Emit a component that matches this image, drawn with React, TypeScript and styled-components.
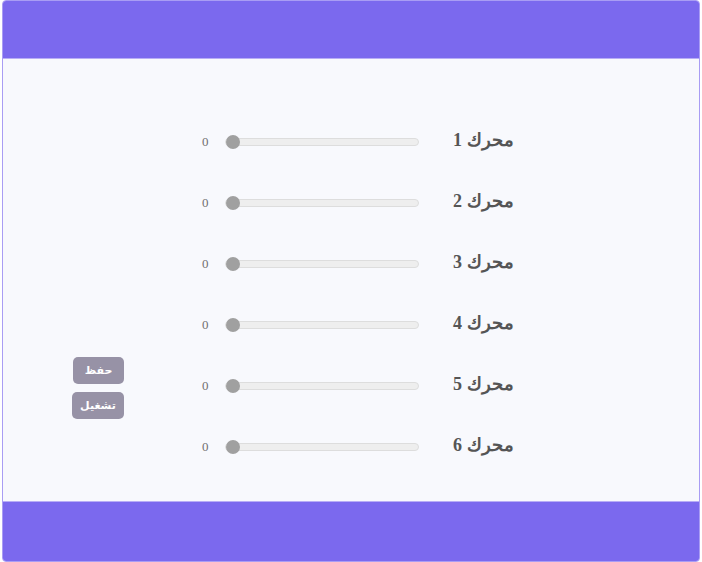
import React from "react";
import styled, { createGlobalStyle } from "styled-components";

const Global = createGlobalStyle`
  html, body { margin: 0; padding: 0; background: #ffffff; }
  body { font-family: "Liberation Serif", "DejaVu Serif", serif; }
`;

const Frame = styled.div`
  margin: 0 2px;
  width: 698px;
  height: 562px;
  box-sizing: border-box;
  border: 1px solid #a99df4;
  border-radius: 4px;
  display: flex;
  flex-direction: column;
  overflow: hidden;
  background: #f8f9fd;
`;

const Bar = styled.div<{ $h: number }>`
  height: ${(p) => p.$h}px;
  flex: none;
  background: #7b69ee;
`;

const Main = styled.div`
  flex: 1;
  display: flex;
  align-items: flex-start;
  padding: 50px 0 0 68px;
  border-top: 1px solid #b8aef6;
  border-bottom: 1px solid #b8aef6;
`;

const Buttons = styled.div`
  margin-top: 248px;
  display: flex;
  flex-direction: column;
  align-items: flex-end;
  gap: 8px;
  width: 53px;
`;

const ActionButton = styled.button<{ $w: number }>`
  border: none;
  border-radius: 5px;
  background: #9792a6;
  color: #ffffff;
  font-family: "DejaVu Sans", "Liberation Sans", sans-serif;
  font-weight: bold;
  font-size: 11px;
  height: 27px;
  width: ${(p) => p.$w}px;
  padding: 0;
  direction: rtl;
`;

const Rows = styled.div`
  margin-left: 78px;
  display: flex;
  flex-direction: column;
`;

const Row = styled.div`
  height: 61px;
  display: flex;
  align-items: center;
`;

const Value = styled.span`
  font-size: 13px;
  color: #707070;
  width: 8px;
  margin-right: 15px;
  padding-top: 4px;
`;

const Range = styled.input`
  -webkit-appearance: none;
  appearance: none;
  width: 194px;
  height: 8px;
  margin: 4px 0 0 0;
  background: #eeeeee;
  border: 1px solid #dddddd;
  border-radius: 4px;
  box-sizing: border-box;
  outline: none;
  &::-webkit-slider-thumb {
    -webkit-appearance: none;
    width: 14px;
    height: 14px;
    border-radius: 50%;
    background: #a0a0a0;
    border: none;
  }
`;

const Label = styled.span`
  margin-left: 34px;
  direction: rtl;
  font-size: 18px;
  font-weight: bold;
  color: #555555;
`;

export default function App() {
  const motors = [1, 2, 3, 4, 5, 6];
  return (
    <>
      <Global />
      <Frame>
        <Bar $h={57} />
        <Main>
          <Buttons>
            <ActionButton $w={51}>حفظ</ActionButton>
            <ActionButton $w={52}>تشغيل</ActionButton>
          </Buttons>
          <Rows>
            {motors.map((m) => (
              <Row key={m}>
                <Value>0</Value>
                <Range type="range" min={0} max={180} defaultValue={0} />
                <Label>محرك {m}</Label>
              </Row>
            ))}
          </Rows>
        </Main>
        <Bar $h={59} />
      </Frame>
    </>
  );
}
